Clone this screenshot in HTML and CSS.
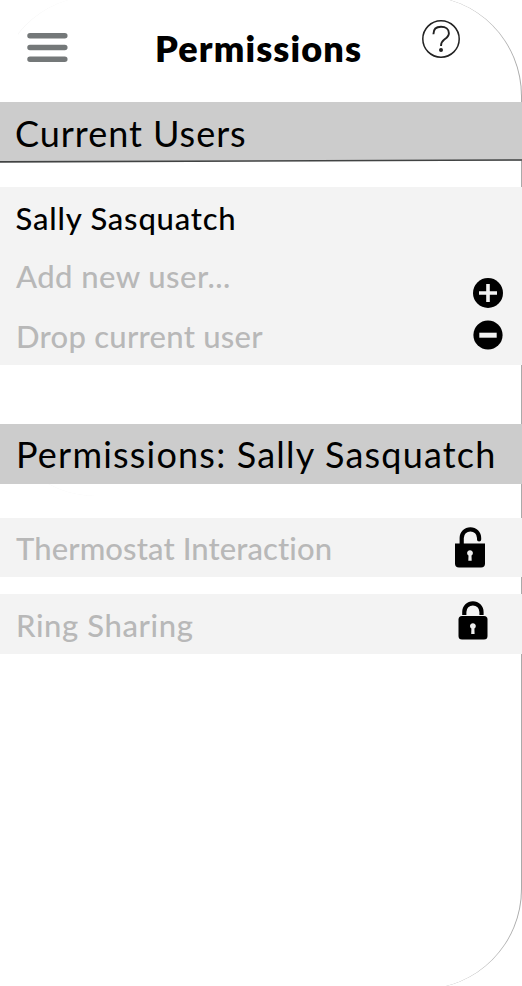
FILE: index.html
```html
<!DOCTYPE html>
<html lang="en">
<head>
<meta charset="utf-8">
<title>Permissions</title>
<link rel="stylesheet" href="styles.css">
</head>
<body>
<main class="screen">
  <div class="frame frame-left"></div>
  <div class="frame frame-right"></div>
  <header class="topbar">
    <svg class="menu" viewBox="0 0 42 32"><path d="M4 5.8H38.8M4 17.5H38.8M4 29.2H38.8" fill="none" stroke="#747879" stroke-width="5.5" stroke-linecap="round"/></svg>
    <h1 class="title">Permissions</h1>
    <svg class="help" viewBox="0 0 40 40" fill="none" stroke="#222"><circle cx="20" cy="20" r="18.2" stroke-width="1.5"/><path d="M12.4 15.2C12.4 10.5 15.4 7.8 20 7.8C24.8 7.8 27.9 10.4 27.9 14.2C27.9 17.4 25.7 18.8 23.3 20.5C20.8 22.3 20 23.5 20 27" stroke-width="1.9"/><circle cx="20" cy="31" r="2" fill="#222" stroke="none"/></svg>
  </header>
  <h2 class="heading heading-users"><span class="t-current">Current Users</span></h2>
  <svg class="rule" viewBox="0 0 522 4"><path d="M0 2.9L522 1" stroke="#414343" stroke-width="1.6"/></svg>
  <section class="users">
    <div class="names">
      <p class="row active"><span class="t-sally">Sally Sasquatch</span></p>
      <p class="row add"><span class="t-add">Add new user...</span></p>
      <p class="row"><span class="t-drop">Drop current user</span></p>
    </div>
    <div class="actions">
      <svg class="action" viewBox="0 0 30 30"><circle cx="15" cy="15" r="15"/><path d="M6 15H24M15 6V24" stroke="#f3f3f3" stroke-width="3.6"/></svg>
      <svg class="action" viewBox="0 0 30 30"><circle cx="15" cy="15" r="14.6"/><path d="M6.3 15.2H23.7" stroke="#f3f3f3" stroke-width="5"/></svg>
    </div>
  </section>
  <h2 class="heading heading-permissions"><span class="t-permissions">Permissions: Sally Sasquatch</span></h2>
  <section class="permission first">
    <p class="row"><span class="t-thermostat">Thermostat Interaction</span></p>
    <svg class="lock open" viewBox="0 0 30 41"><path d="M6.7 18V11A8.7 8.7 0 0 1 24.1 11V12.5" fill="none" stroke="#000" stroke-width="4.2" stroke-linecap="round"/><path d="M0 16.5H30V36.5Q30 40.5 26 40.5H4Q0 40.5 0 36.5Z"/><path d="M13.5 28.6A2.9 2.9 0 1 1 16.5 28.6L16.7 33.8H13.3Z" fill="#eee"/></svg>
  </section>
  <section class="permission second">
    <p class="row"><span class="t-ring">Ring Sharing</span></p>
    <svg class="lock closed" viewBox="0 0 30 39"><path d="M6.3 14V10.9A8.6 8.6 0 0 1 23.5 10.9V14" fill="none" stroke="#000" stroke-width="4.2"/><rect x=".5" y="15" width="29" height="23.5" rx="3.5"/><path d="M13.4 27.6A2.9 2.9 0 1 1 16.4 27.6L16.6 33H13.2Z" fill="#eee"/></svg>
  </section>
</main>
</body>
</html>
```
FILE: styles.css
```css
* { box-sizing: border-box; }
body { margin: 0; background: #fff; font-family: Lato, "Noto Sans", sans-serif; font-variant-ligatures: none; color: #000; }
h1, h2, p { margin: 0; }
svg { display: block; flex: none; }
.screen { position: relative; height: 986px; overflow: hidden; display: flex; flex-direction: column; }
.frame { position: absolute; top: -4px; right: 0; bottom: -3px; left: -4px; border-radius: 100px; }
.frame-right { border-right: 1.6px solid #aaa; }
.frame-left { bottom: auto; height: 500px; border-left: 1px solid #f4f4f4; clip-path: inset(0 0 0 22px); }
.topbar, .heading, .rule, .users, .permission { position: relative; flex: none; }
.topbar { height: 102px; display: flex; align-items: flex-start; padding-left: 26px; }
.menu { width: 42px; height: 32px; margin-top: 30px; }
.title { width: 208px; margin: 26px 0 0 87px; font-size: 36px; line-height: 44px; font-weight: 800; letter-spacing: 1.13px; white-space: nowrap; }
.help { width: 40px; height: 40px; margin: 19px 0 0 58px; }
.heading { height: 60px; background: #ccc; padding-left: 16px; font-size: 36px; line-height: 61px; font-weight: 400; white-space: nowrap; }
.heading-users { height: 59px; padding-left: 15px; line-height: 63px; }
.rule { width: 522px; height: 4px; margin-top: -2px; }
.users { height: 178px; margin-top: 24px; background: #f3f3f3; display: flex; justify-content: space-between; }
.row { padding-left: 16px; font-size: 31px; line-height: 60px; color: #b8b8b8; white-space: nowrap; font-weight: 500; }
.names .row { height: 59.5px; }
.names .active { color: #000; line-height: 62px; padding-left: 15.5px; }
.names .add { line-height: 58px; }
.t-current { letter-spacing: .97px; }
.t-permissions { letter-spacing: 1.2px; }
.t-sally { letter-spacing: .8px; }
.t-add { letter-spacing: .45px; }
.t-drop { letter-spacing: .26px; }
.t-thermostat { letter-spacing: .1px; }
.t-ring { letter-spacing: .62px; }
.actions { display: flex; flex-direction: column; gap: 12px; padding: 91px 19px 0 0; }
.action { width: 30px; height: 30px; }
.heading-permissions { margin-top: 59px; }
.permission { height: 59px; background: #f3f3f3; display: flex; justify-content: space-between; }
.first { margin-top: 34px; }
.second { margin-top: 17px; height: 60px; }
.second .row { line-height: 62px; }
.lock { width: 30px; }
.open { height: 41px; margin: 9px 37px 0 0; }
.closed { height: 39px; margin: 7px 34px 0 0; }
```
